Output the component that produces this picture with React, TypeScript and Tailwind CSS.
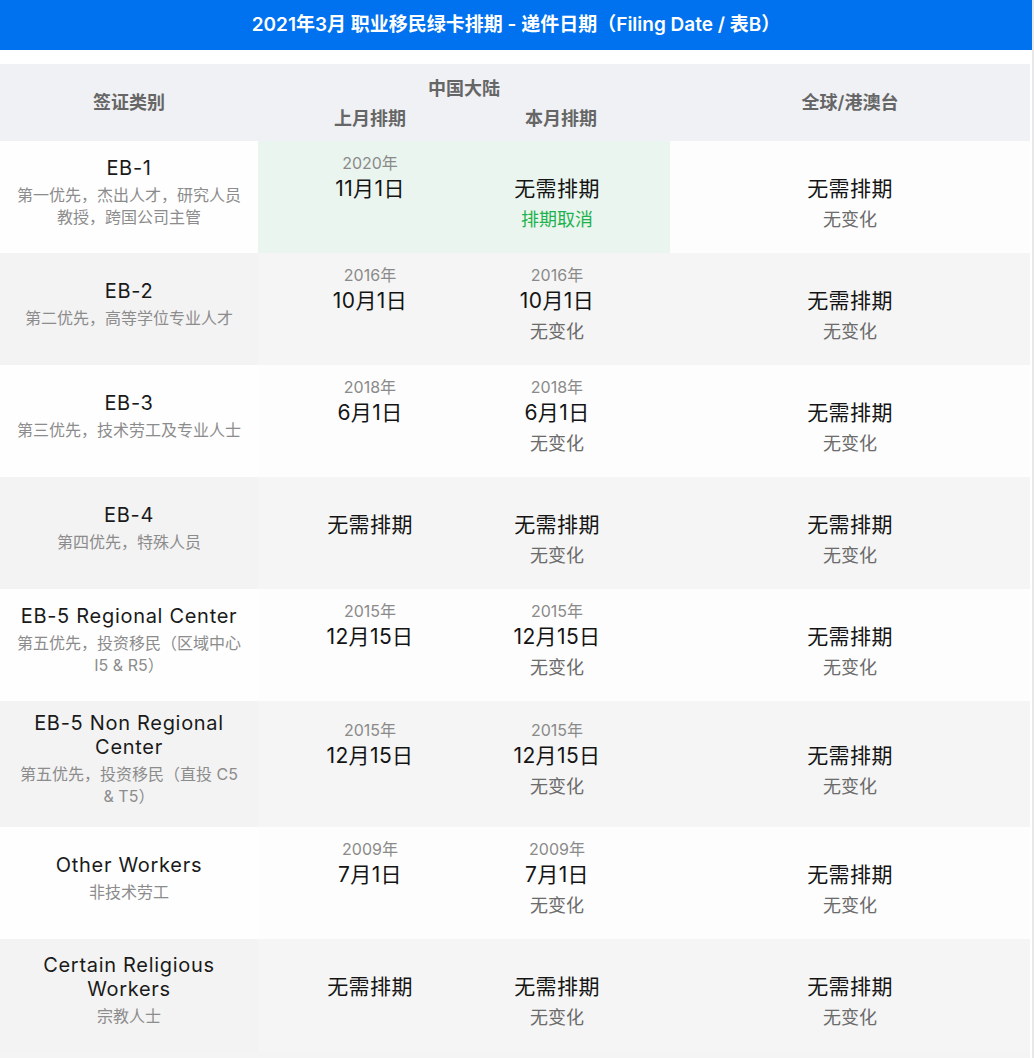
import React from 'react';

type DateCell = { year?: string; main: string; status?: string; green?: boolean };

interface Row {
  code: string;
  desc: string;
  prev: DateCell;
  cur: DateCell;
  world: DateCell;
  highlight?: boolean;
}

const same = { main: '无需排期', status: '无变化' };

const rows: Row[] = [
  {
    code: 'EB-1',
    desc: '第一优先，杰出人才，研究人员教授，跨国公司主管',
    prev: { year: '2020年', main: '11月1日' },
    cur: { main: '无需排期', status: '排期取消', green: true },
    world: same,
    highlight: true,
  },
  {
    code: 'EB-2',
    desc: '第二优先，高等学位专业人才',
    prev: { year: '2016年', main: '10月1日' },
    cur: { year: '2016年', main: '10月1日', status: '无变化' },
    world: same,
  },
  {
    code: 'EB-3',
    desc: '第三优先，技术劳工及专业人士',
    prev: { year: '2018年', main: '6月1日' },
    cur: { year: '2018年', main: '6月1日', status: '无变化' },
    world: same,
  },
  {
    code: 'EB-4',
    desc: '第四优先，特殊人员',
    prev: { main: '无需排期' },
    cur: same,
    world: same,
  },
  {
    code: 'EB-5 Regional Center',
    desc: '第五优先，投资移民（区域中心 I5 & R5）',
    prev: { year: '2015年', main: '12月15日' },
    cur: { year: '2015年', main: '12月15日', status: '无变化' },
    world: same,
  },
  {
    code: 'EB-5 Non Regional Center',
    desc: '第五优先，投资移民（直投 C5 & T5）',
    prev: { year: '2015年', main: '12月15日' },
    cur: { year: '2015年', main: '12月15日', status: '无变化' },
    world: same,
  },
  {
    code: 'Other Workers',
    desc: '非技术劳工',
    prev: { year: '2009年', main: '7月1日' },
    cur: { year: '2009年', main: '7月1日', status: '无变化' },
    world: same,
  },
  {
    code: 'Certain Religious Workers',
    desc: '宗教人士',
    prev: { main: '无需排期' },
    cur: same,
    world: same,
  },
];

function Cell({ c }: { c: DateCell }) {
  return (
    <div className="flex flex-col items-center pb-[6px]">
      <div className="h-[20px] leading-[20px] text-[16px] text-[#8a8a8a]">{c.year ?? ''}</div>
      <div className="h-[32px] leading-[32px] text-[21px] tracking-[0.4px] text-[#141414]">{c.main}</div>
      <div className={`h-[30px] leading-[30px] text-[18px] ${c.green ? 'text-[#1db24d]' : 'text-[#6b6b6b]'}`}>
        {c.status ?? ''}
      </div>
    </div>
  );
}

export default function App() {
  return (
    <div className="flex w-[1034px] min-h-[1058px] bg-white font-['Inter','Noto_Sans_CJK_SC',sans-serif]">
      <div className="w-[1032px] flex flex-col">
        {/* title bar */}
        <div className="h-[50px] bg-[#0071ef] flex items-center justify-center text-white text-[19px] font-semibold">
          2021年3月 职业移民绿卡排期 - 递件日期（Filing Date / 表B）
        </div>

        <div className="mt-[14px] w-[1030px] flex flex-col">
          {/* table head */}
          <div className="h-[77px] bg-[#f0f1f4] flex text-[18px] font-semibold text-[#666]">
            <div className="w-[258px] flex items-center justify-center">签证类别</div>
            <div className="w-[412px] flex flex-col">
              <div className="h-[46px] flex items-center justify-center pt-[2px]">中国大陆</div>
              <div className="flex">
                <div className="w-[224px] text-center leading-[18px]">上月排期</div>
                <div className="w-[188px] pr-[30px] text-center leading-[18px]">本月排期</div>
              </div>
            </div>
            <div className="flex-1 flex items-center justify-center">全球/港澳台</div>
          </div>

          {rows.map((r, i) => {
            const odd = i % 2 === 1;
            return (
              <div key={r.code} className={`flex min-h-[112px] ${odd ? 'bg-[#f5f5f5]' : 'bg-[#fdfdfd]'}`}>
                <div
                  className={`w-[258px] px-[15px] pt-[10px] pb-[20px] flex flex-col justify-center items-center text-center ${
                    odd ? 'bg-[#f3f3f3]' : 'bg-[#fefefe]'
                  }`}
                >
                  <div className="text-[20px] leading-[24px] tracking-[0.7px] text-[#1a1a1a]">{r.code}</div>
                  <div className="mt-[4px] text-[16px] leading-[22px] text-[#8c8c8c]">{r.desc}</div>
                </div>
                <div className={`w-[412px] flex ${r.highlight ? 'bg-[#ebf5ef]' : ''}`}>
                  <div className="w-[224px] flex items-center justify-center">
                    <Cell c={r.prev} />
                  </div>
                  <div className="w-[188px] pr-[38px] flex items-center justify-center">
                    <Cell c={r.cur} />
                  </div>
                </div>
                <div className="flex-1 flex items-center justify-center">
                  <Cell c={r.world} />
                </div>
              </div>
            );
          })}
          <div className="h-[8px] bg-[#f4f4f4]" />
        </div>
      </div>
      <div className="w-[2px] bg-[#e8e8e8]" />
    </div>
  );
}
